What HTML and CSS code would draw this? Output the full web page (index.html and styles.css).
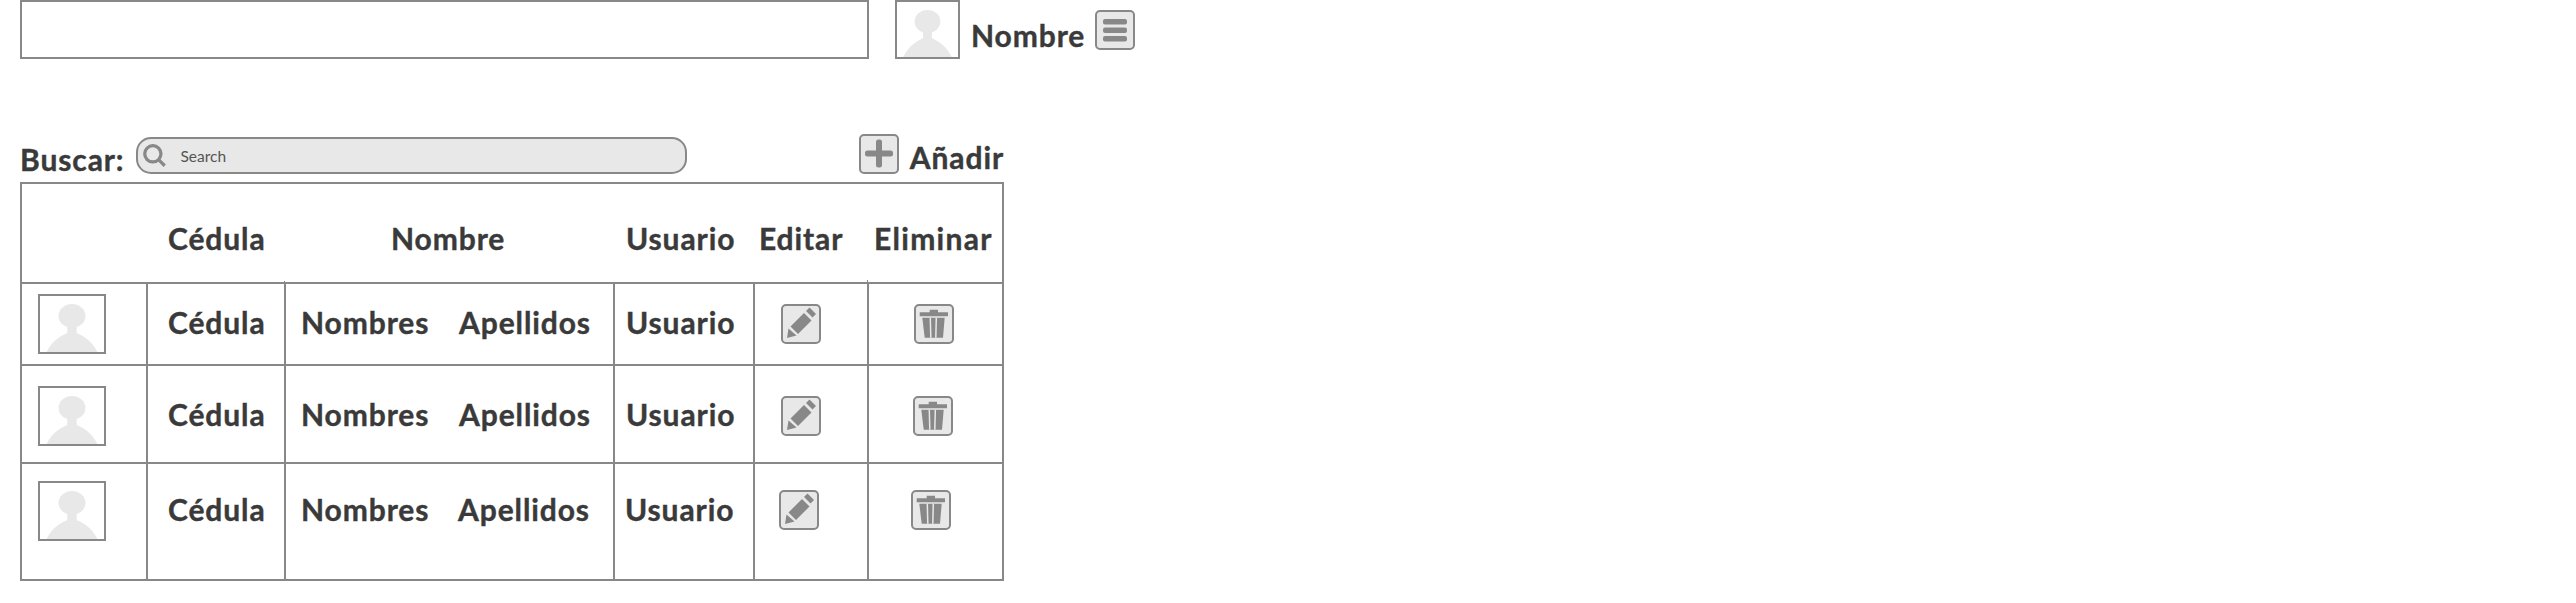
FILE: index.html
```html
<!DOCTYPE html>
<html lang="es">
<head>
  <meta charset="UTF-8">
  <title>Usuarios</title>
  <link rel="stylesheet" href="styles.css">
</head>
<body>
  <svg class="defs" width="0" height="0">
    <symbol id="person" viewBox="0 0 68 59" preserveAspectRatio="none">
      <ellipse cx="34" cy="21" rx="14.3" ry="12.5"/>
      <path d="M7 59C13 47 22 42 29 39V30H39V39C46 42 55 47 61 59Z"/>
    </symbol>
    <symbol id="pencil" viewBox="0 0 36 36">
      <path d="M4 32 5.500 22.500 13.500 29.500Z"/>
      <path d="M7.500 20.500 21 7 28.500 14.500 15 28Z"/>
      <path d="M23 5 26.500 1.500 33 8 29.500 11.500Z"/>
    </symbol>
    <symbol id="trash" viewBox="0 0 36 36">
      <path d="M13.700 6.300V3.700H22V6.300H32V10.300H3.700V6.300Z"/>
      <path d="M6.300 11.700H28.700L27 31.700H8.700Z"/>
      <path class="slot" d="M14.300 11.700 14.800 31.700M20.300 11.700 19.800 31.700"/>
    </symbol>
  </svg>

  <header class="topbar">
    <div class="logo-box"></div>
    <div class="avatar avatar-top"><svg><use href="#person"/></svg></div>
    <span class="user-name">Nombre</span>
    <button class="icon-btn menu-btn">
      <svg viewBox="0 0 35 36"><rect x="5.500" y="7" width="24" height="5.500" rx="2"/><rect x="5.500" y="15.500" width="24" height="5.500" rx="2"/><rect x="5.500" y="24" width="24" height="5.500" rx="2"/></svg>
    </button>
  </header>

  <div class="toolbar">
    <label class="search-label">Buscar:</label>
    <div class="search">
      <svg class="search-icon" viewBox="0 0 24 24"><circle cx="10" cy="10" r="7.500"/><path d="M15.500 15.500 21 21"/></svg>
      <span>Search</span>
    </div>
    <div class="add">
      <button class="icon-btn">
        <svg viewBox="0 0 35 36"><rect x="3.500" y="14.500" width="28" height="6" rx="2.500"/><rect x="14.500" y="3.500" width="6" height="28" rx="2.500"/></svg>
      </button>
      <span class="add-text">Añadir</span>
    </div>
  </div>

  <table class="users">
    <colgroup>
      <col class="c-photo"><col class="c-id"><col class="c-name"><col class="c-user"><col class="c-edit"><col class="c-del">
    </colgroup>
    <thead>
      <tr>
        <th></th>
        <th class="h-id">Cédula</th>
        <th class="h-name">Nombre</th>
        <th class="h-user">Usuario</th>
        <th class="h-edit">Editar</th>
        <th class="h-del">Eliminar</th>
      </tr>
    </thead>
    <tbody>
      <tr class="row-a">
        <td class="td-photo tick-a"><div class="cell"><div class="avatar"><svg><use href="#person"/></svg></div></div></td>
        <td class="td-id tick-b"><div class="cell">Cédula</div></td>
        <td class="td-name"><div class="cell"><span class="first">Nombres</span><span>Apellidos</span></div></td>
        <td class="td-user"><div class="cell">Usuario</div></td>
        <td class="td-edit tick-c"><div class="cell"><button class="icon-btn"><svg viewBox="0 0 36 36"><use href="#pencil"/></svg></button></div></td>
        <td class="td-del"><div class="cell"><button class="icon-btn"><svg viewBox="0 0 36 36"><use href="#trash"/></svg></button></div></td>
      </tr>
      <tr class="row-b">
        <td class="td-photo"><div class="cell"><div class="avatar"><svg><use href="#person"/></svg></div></div></td>
        <td class="td-id"><div class="cell">Cédula</div></td>
        <td class="td-name"><div class="cell"><span class="first">Nombres</span><span>Apellidos</span></div></td>
        <td class="td-user"><div class="cell">Usuario</div></td>
        <td class="td-edit"><div class="cell"><button class="icon-btn"><svg viewBox="0 0 36 36"><use href="#pencil"/></svg></button></div></td>
        <td class="td-del"><div class="cell"><button class="icon-btn"><svg viewBox="0 0 36 36"><use href="#trash"/></svg></button></div></td>
      </tr>
      <tr class="row-c">
        <td class="td-photo"><div class="cell"><div class="avatar"><svg><use href="#person"/></svg></div></div></td>
        <td class="td-id"><div class="cell">Cédula</div></td>
        <td class="td-name"><div class="cell"><span class="first">Nombres</span><span>Apellidos</span></div></td>
        <td class="td-user"><div class="cell">Usuario</div></td>
        <td class="td-edit"><div class="cell"><button class="icon-btn"><svg viewBox="0 0 36 36"><use href="#pencil"/></svg></button></div></td>
        <td class="td-del"><div class="cell"><button class="icon-btn"><svg viewBox="0 0 36 36"><use href="#trash"/></svg></button></div></td>
      </tr>
    </tbody>
  </table>
</body>
</html>
```

FILE: styles.css
```css
body {
  margin: 0;
  padding-left: 20px;
  background: #fff;
  color: #3a3a3a;
  font-family: "Lato", sans-serif;
  font-weight: 700;
  font-size: 30px;
  letter-spacing: 0.9px;
  -webkit-text-stroke: 0.4px #3a3a3a;
}

.defs {
  position: absolute;
}

.topbar {
  display: flex;
  align-items: flex-start;
  height: 59px;
}

.logo-box {
  width: 849px;
  height: 59px;
  box-sizing: border-box;
  border: 2px solid #888;
}

.avatar {
  flex-shrink: 0;
  width: 68px;
  height: 60px;
  box-sizing: border-box;
  border: 2px solid #888;
  background: #fff;
}

.avatar svg {
  display: block;
  width: 100%;
  height: 100%;
  fill: #e8e8e8;
}

.avatar-top {
  width: 65px;
  height: 59px;
  margin-left: 26px;
}

.user-name {
  margin: 17px 10px 0 11px;
  line-height: 36px;
}

.icon-btn {
  display: block;
  flex-shrink: 0;
  width: 40px;
  height: 40px;
  padding: 0;
  box-sizing: border-box;
  border: 2px solid #888;
  border-radius: 5px;
  background: #e8e8e8;
}

.icon-btn svg {
  display: block;
  width: 100%;
  height: 100%;
  fill: #888;
}

.slot {
  fill: none;
  stroke: #e8e8e8;
  stroke-width: 1.5;
}

.menu-btn {
  margin-top: 10px;
}

.toolbar {
  display: flex;
  align-items: flex-end;
  width: 984px;
  height: 40px;
  margin-top: 75px;
}

.search-label {
  line-height: 36px;
  margin-right: 11px;
  margin-bottom: -3px;
}

.search {
  display: flex;
  align-items: center;
  width: 551px;
  height: 37px;
  box-sizing: border-box;
  border: 2px solid #888;
  border-radius: 15px;
  background: #e8e8e8;
  color: #555;
  font-size: 15.500px;
  font-weight: 400;
  letter-spacing: 0;
  -webkit-text-stroke: 0;
}

.search-icon {
  width: 26px;
  height: 26px;
  margin: 0 13px 0 4px;
  fill: none;
  stroke: #888;
  stroke-width: 3;
}

.add {
  display: flex;
  align-items: flex-end;
  gap: 11px;
  margin-left: auto;
}

.add-text {
  line-height: 36px;
  margin-bottom: -1px;
}

.users {
  table-layout: fixed;
  width: 984px;
  margin-top: 8px;
  border-collapse: collapse;
  border: 2px solid #888;
}

.c-photo { width: 126px; }
.c-id { width: 138px; }
.c-name { width: 329px; }
.c-user { width: 140px; }
.c-edit { width: 114px; }
.c-del { width: 135px; }

th {
  height: 89px;
  padding: 9px 0 0;
  text-align: left;
  font-weight: 700;
  border-bottom: 2px solid #888;
}

.h-id { padding-left: 21px; }
.h-name { padding-left: 106px; }
.h-user { padding-left: 12px; }
.h-edit { padding-left: 5px; }
.h-del { padding-left: 6px; letter-spacing: 1.3px; }

td {
  position: relative;
  padding: 0;
  vertical-align: top;
  border: 2px solid #888;
}

.cell {
  display: flex;
  align-items: center;
  height: 56px;
}

.cell .avatar,
.cell .icon-btn {
  margin-top: 4px;
}

.row-a td { height: 82px; padding-top: 10px; box-sizing: border-box; }
.row-b td { height: 98px; padding-top: 20px; box-sizing: border-box; }
.row-c td { height: 117px; padding-top: 17px; box-sizing: border-box; }

.td-photo { padding-left: 16px; }
.td-id { padding-left: 20px; }
.td-name { padding-left: 15px; }
.td-user { padding-left: 11px; }
.td-edit { padding-left: 26px; }
.td-del { padding-left: 45px; }

.first {
  width: 158px;
}

.row-b .td-del { padding-left: 44px; }
.row-c .td-name .first { width: 157px; }
.row-c .td-user { padding-left: 10px; }
.row-c .td-edit { padding-left: 24px; }
.row-c .td-del { padding-left: 42px; }
.row-c .icon-btn { margin-top: 2px; }

/* little overshoots of the column lines above the first row */
.tick-a::before,
.tick-b::before,
.tick-c::after {
  content: "";
  position: absolute;
  width: 1px;
  background: #888;
}

.tick-a::before { right: -1px; top: -2px; height: 2px; }
.tick-b::before { right: -1px; top: -3px; height: 3px; }
.tick-c::after { right: -1px; top: -4px; height: 4px; }
```
